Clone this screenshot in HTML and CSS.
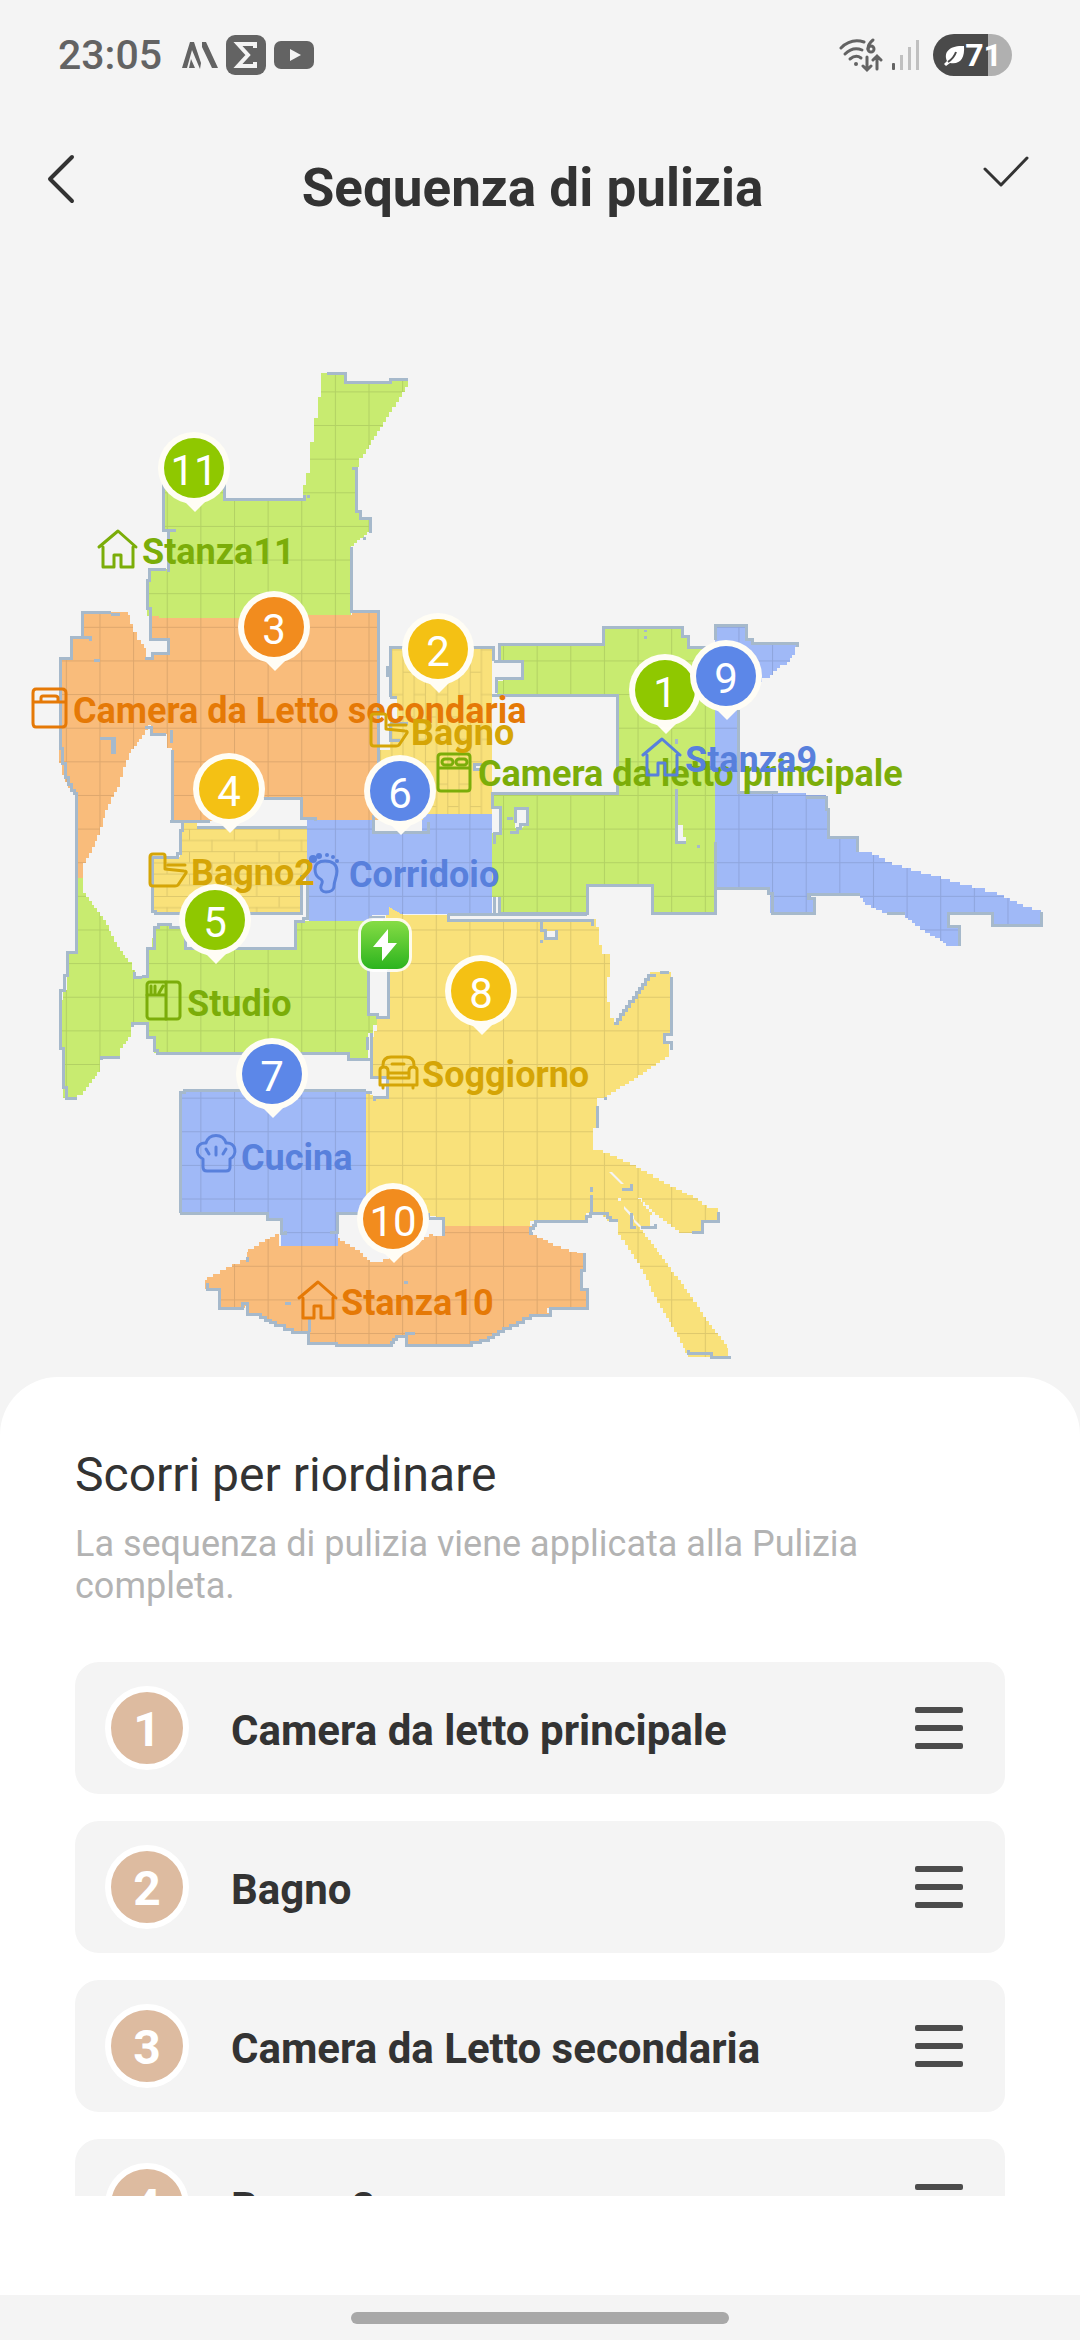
FILE: index.html
```html
<!DOCTYPE html>
<html lang="it" dir="ltr">
<head>
  <meta charset="utf-8">
  <meta name="viewport" content="width=device-width, initial-scale=1">
  <title>Sequenza di pulizia</title>
  <link rel="stylesheet" href="styles.css">
</head>
<body>

  <div class="status">
    <div class="status-left">
      <span class="clock">23:05</span>
      <svg width="36" height="40" viewBox="0 0 36 40">
        <path d="M0 33 L8 7 H12 L19 28 L18 34 L10 15 L5 33z M20 7 H24 L36 33 H30 L20 12z M9 24 L13 33 H7z" fill="#636363"/>
      </svg>
      <svg width="40" height="40" viewBox="0 0 40 40">
        <rect width="40" height="40" rx="9" fill="#636363"/>
        <path d="M29 13 V9 H12 L22 20 L12 31 H29 V27" fill="none" stroke="#f4f4f4" stroke-width="4"/>
      </svg>
      <svg width="40" height="28" viewBox="0 0 40 28">
        <rect width="40" height="28" rx="7" fill="#636363"/>
        <path d="M16 8 L27 14 L16 20z" fill="#f4f4f4"/>
      </svg>
    </div>
    <div class="status-right">
      <svg width="44" height="36" viewBox="0 0 44 36">
        <g fill="none" stroke="#636363" stroke-width="3" stroke-linecap="round">
          <path d="M2 11 Q12 1 25 5"/>
          <path d="M6 17 Q14 9 23 13"/>
          <path d="M11 22 Q17 17 22 21"/>
          <path d="M28 20 V32 M24 29 L28 33 L32 29 M38 32 V19 M34 23 L38 19 L42 23"/>
          <path d="M34 3 Q29 7 29 12"/>
          <circle cx="32" cy="12" r="3"/>
        </g>
        <circle cx="17" cy="27" r="2" fill="#636363"/>
      </svg>
      <svg width="28" height="32" viewBox="0 0 28 32">
        <rect x="0" y="24" width="3" height="7" rx="1" fill="#636363"/>
        <path d="M8 16 h3 v15 h-3z M16 8 h3 v23 h-3z M24 1 h3 v30 h-3z" fill="#c0c0c0"/>
      </svg>
      <div class="battery">
        <svg width="22" height="22" viewBox="0 0 22 22">
          <path d="M4 17 C0 8 7 1 21 2 C22 14 17 21 7 19 L3 22 L1 20z" fill="#fff"/>
          <path d="M5 18 Q11 14 13 8" fill="none" stroke="#4a4a4a" stroke-width="2"/>
        </svg>
        <span>71</span>
      </div>
    </div>
  </div>

  <header class="header">
    <button class="back" aria-label="Indietro">
      <svg width="36" height="50" viewBox="0 0 36 50">
        <path d="M26 3 L4 25 L26 47" fill="none" stroke="#333" stroke-width="4" stroke-linecap="round" stroke-linejoin="round"/>
      </svg>
    </button>
    <h1>Sequenza di pulizia</h1>
    <button class="confirm" aria-label="Conferma">
      <svg width="46" height="34" viewBox="0 0 46 34">
        <path d="M2 14 L18 30 L44 3" fill="none" stroke="#333" stroke-width="3" stroke-linecap="round" stroke-linejoin="round"/>
      </svg>
    </button>
  </header>

  <main class="map">
    <svg viewBox="0 240 1080 1137" role="img" aria-label="Mappa delle stanze">
      <defs>
        <pattern id="tiles" x="32.2" y="391.4" width="33.63" height="33.63" patternUnits="userSpaceOnUse">
          <path d="M0 .5 H34 M.5 0 V34" class="grout"/>
        </pattern>
        <pattern id="bricks" x="189" y="828.8" width="44.8" height="22.4" patternUnits="userSpaceOnUse">
          <path d="M0 .5 H45 M0 11.7 H45 M.5 0 V11 M22.9 11 V22.4" class="grout"/>
        </pattern>
        <pattern id="planks" x="447.3" y="671.7" width="22.4" height="44.8" patternUnits="userSpaceOnUse">
          <path d="M.5 0 V45 M11.7 0 V45 M0 .5 H11 M11 22.9 H22.4" class="grout"/>
        </pattern>

        <!-- room outlines, used once for the colour and once for the floor -->
        <g class="cells">
          <path id="r11" d="M321 373 H345 V382 H390 V379 H408 V387 L383 427 L374 440 L363 458 L359 467 L357 468 V510 L359 518 L370 520 V532 L357 543 L351 548 V615 H273 V618 H159 V616 H150 L147 607 V580 L149 569 H166 L168 530 L163 529 V483 H224 V499 H303 V485 L306 473 L310 442 L314 418 L318 397z"/>
          <path id="r3" d="M81 612 H111 L128 615 L130 624 L133 632 L137 640 L144 648 L146 658 H152 V653 H168 V639 H149 V616 H159 V618 H273 V615 H352 V612 H378 V820 H315 L301 818 V798 H240 V821 H172 V748 H167 V734 H151 V725 L145 735 L131 753 L126 767 L120 787 L114 797 L108 810 L100 835 L92 853 L83 868 V878 H76 V795 L71 788 L65 775 L62 763 L59 748 V658 H71 V639 L81 637z"/>
          <path id="r5" d="M76 878 H83 V893 L103 920 L117 947 L128 962 L135 977 H142 L147 972 L149 948 L154 927 L158 924 H170 V927 H185 V948 H295 V921 H373 L368 972 V1014 L377 1017 V1025 L373 1033 L368 1037 V1059 H348 V1053 H156 L154 1037 H147 V1023 H132 L131 1037 L123 1048 L120 1057 H101 L100 1072 L92 1083 L83 1095 L77 1098 H66 L63 1087 V1050 L60 1048 V1000 L63 990 L67 975 V953 H76z"/>
          <path id="r4" d="M182 823 H197 V827 H307 V875 H300 V913 H154 L152 910 V857 H177 L180 853 V830z"/>
          <path id="r6" d="M307 820 H373 V832 H422 V814 H492 V914 H404 L390 908 V915 H372 V921 H309 V875 H307z"/>
          <path id="r2" d="M390 647 H492 V814 H423 V820 H378 V750 L390 748 V723 L397 720 V697 H390z"/>
          <path id="r1" d="M499 644 H603 V627 H678 L682 636 H688 V647 H715 V913 H651 V885 H587 V913 H499 V897 H492 V833 H500 V807 H492 V793 H617 V695 H497 V681 L503 678 H522 V661 H499z"/>
          <path id="r9" d="M715 625 H746 L747 639 L752 643 H792 L797 647 L795 655 L787 665 L780 668 L770 678 L762 682 L738 700 V792 L778 793 L806 795 L826 797 V809 L828 810 V837 L857 839 V852 L872 855 L892 865 L960 885 L997 895 L1023 907 L1041 912 V925 H992 V913 H950 V927 H959 V946 H949 L940 938 L930 933 L915 923 L905 915 L887 913 L865 902 L860 894 H808 L814 901 V913 H772 L770 888 H715z"/>
          <path id="r8" d="M389 907 L403 915 H448 V919 H592 L596 927 L599 945 L602 954 H610 V977 H607 V1002 L610 1018 L614 1023 L648 975 L650 972 H671 V1033 L663 1037 L665 1042 L671 1044 L669 1057 L647 1072 L607 1098 L597 1102 V1128 L593 1135 V1150 L603 1153 L630 1165 L670 1187 L693 1198 L707 1208 L718 1212 V1221 H702 V1233 H683 L675 1227 L655 1212 L642 1198 L632 1193 L652 1215 L650 1227 H642 L640 1230 L648 1240 L665 1263 L690 1297 L703 1317 L727 1348 L728 1357 H712 L688 1353 L677 1332 L660 1303 L640 1263 L628 1245 L618 1230 V1221 H610 L603 1213 H588 L586 1221 H533 L530 1226 H443 V1219 L428 1213 H366 V1091 L373 1098 H386 L388 1087 V1077 H371 V1037 L377 1025 V1017 H388 V960 L372 940z"/>
          <path id="r7" d="M180 1091 H366 V1213 H337 L338 1246 H279 L281 1219 H268 V1213 H180z"/>
          <path id="r10" d="M279 1234 L270 1239 L248 1252 L247 1260 L232 1267 L207 1280 L205 1289 H219 V1308 H242 L247 1303 V1314 L260 1317 L275 1325 L292 1332 H308 V1343 L336 1345 H388 L396 1336 H406 V1345 H463 L488 1337 L503 1328 L530 1315 L550 1313 L547 1308 H587 V1289 H581 V1270 L584 1253 L577 1252 L553 1243 L532 1232 V1226 H443 V1236 L433 1234 L420 1243 L383 1262 L370 1260 L360 1250 L340 1238 L338 1246 H279z"/>
        </g>

        <!-- number pin, tip points down -->
        <g id="pin">
          <path d="M-10 33 L1 44 L12 33z"/>
          <circle r="36"/>
        </g>

        <g id="house">
          <path d="M1 17 L20 1 L38 17 M5 17 V37 H16 V25 H23 V37 H35 V17"/>
        </g>
        <g id="bath">
          <path d="M4 1 H14 Q16 1 16 3 V16 L35 18 Q38 18 37 20 L29 32 Q28 33 26 33 H4 Q1 33 1 30 V4 Q1 1 4 1z M19 12 H36"/>
        </g>
      </defs>

      <g shape-rendering="crispEdges">
        <use href="#r11" class="green"/>
        <use href="#r3" class="orange"/>
        <use href="#r5" class="green"/>
        <use href="#r8" class="yellow"/>
        <use href="#r6" class="blue"/>
        <use href="#r4" class="yellow"/>
        <use href="#r2" class="yellow"/>
        <use href="#r1" class="green"/>
        <use href="#r9" class="blue"/>
        <use href="#r10" class="orange"/>
        <use href="#r7" class="blue"/>
        <path d="M389 907 L403 915 H412 V925 H389z" class="yellow"/>
      </g>
      <g>
        <use href="#r11" fill="url(#tiles)"/>
        <use href="#r3" fill="url(#tiles)"/>
        <use href="#r5" fill="url(#tiles)"/>
        <use href="#r8" fill="url(#tiles)"/>
        <use href="#r6" fill="url(#tiles)"/>
        <use href="#r4" fill="url(#bricks)"/>
        <use href="#r2" fill="url(#planks)"/>
        <use href="#r1" fill="url(#tiles)"/>
        <use href="#r9" fill="url(#tiles)"/>
        <use href="#r10" fill="url(#tiles)"/>
        <use href="#r7" fill="url(#tiles)"/>
      </g>

      <!-- free spots inside the rooms -->
      <g fill="#f4f4f4">
        <path d="M515 808 H527 V823 L522 828 H515z M677 825 H683 V837 H686 V843 H677z M545 931 H555 V938 H545z M369 970 H388 V1016 H369z M474 764 H482 V769 H474z M380 700 H388 V748 H380z"/>
        <path d="M609 1172 h3 l12 12 h-3z M618 1198 h3 v3 h-3z M624 1206 l10 10 v4 l-10 -11z M634 1219 l8 8 h-3 l-5 -5z"/>
      </g>

      <g class="walls cells" shape-rendering="crispEdges">
        <path d="M327 373 H345 V382 H390 V379 H408 M352 468 H356 V511 H360 V518 H370 V533 M363 538 H366 M351 547 V611 H378 V815"/>
        <path d="M163 483 V530 H176 M168 530 V572 M166 569 H149 V580 H147 V608 H150 V639 H168 V653 H152 V658 H145 M224 483 V499 H304 V495 M307 496 H310"/>
        <path d="M111 612 H82 V637 H71 V658 H60 V748 H62 V763 H65 V777 L71 790 L76 796 V952 H67 V975 H64 V990 L60 1000 V1048 H63 V1087 L66 1098 H77 M111 614 H120 M82 637 L90 641 M94 660 H100 M100 738 H114 V754 M112 738 V754"/>
        <path d="M145 727 H151 V734 H166 M171 730 V743 M172 750 V821 H210 M264 798 H301 V818 H315 V821 M170 821 H182 M307 827 H197 M182 823 V830 H180 V853 L177 857 H152 V911 H155 V913 H301 V875 M307 875 V918"/>
        <path d="M373 815 V832 H428 V822 M390 697 H397 M390 697 V647 H405 M470 647 H493 V661 M387 666 V677 M390 723 H408 M390 724 V740 H400"/>
        <path d="M494 661 H499 V644 H603 V627 H678 L682 636 H688 V647 H712 M499 661 H522 V678 H503 L496 682 V693 M492 695 H617 V793 H492 V807 H500 V833 H494 V844 M494 897 V913 M499 897 V913 H587 V885 H652 V913 H715 V842 M645 630 V632 M645 636 V639"/>
        <path d="M515 823 V808 H527 V824 H522 L517 832 H510 M507 818 H513 M676 789 V842 H686 M697 846 H700 M676 739 V744 M482 764 H474 V769 H482"/>
        <path d="M715 640 V625 H746 V639 H752 V643 H792 L797 647 M738 710 V792 H778 M806 797 H826 V809 H828 V837 H857 V852 M1041 912 V925 H992 V913 H948 V926 H959 V946 M887 913 H905 M860 894 H812 L808 898 L814 901 V913 H772 V893 L768 888 H716"/>
        <path d="M494 897 V913 M448 914 V920 H592 V926 M448 914 H587 M541 920 V930 H545 V938 H556 V930 M540 941 H543"/>
        <path d="M614 1023 L648 975 H656 M660 972 H669 M671 977 V1034 H664 V1042 H671 V1050 M607 1098 H604 M597 1106 V1128"/>
        <path d="M142 977 H135 L134 972 M142 976 L147 972 V948 H149 L154 948 V927 L158 924 H170 V927 H185 V948 H295 V921 H303 V918 H309 M368 970 V1014 H377 V1017 H388 V970 M369 917 H385"/>
        <path d="M77 1098 H66 M101 1060 V1057 H120 M132 1027 V1023 H147 V1037 H154 V1050 L157 1053 H348 V1059 H371 V1077 H387 V1097 H374 V1101 M371 1033 V1059 M367 1050 V1037"/>
        <path d="M372 1092 H366 M180 1213 V1092 H184 V1090 H366 M180 1213 H267 V1219 H281 V1233 L285 1231 M366 1213 H337 V1232 H330 M428 1213 V1218 H443 V1236"/>
        <path d="M533 1233 L530 1228 L535 1221 H586 V1216 L590 1213 H603 L610 1220 H618 M591 1195 V1213 M591 1187 V1192 M622 1189 H631 V1184 M631 1213 V1227 H636 M641 1227 H650 L655 1224 M718 1212 V1221 H702 V1232 H692 M688 1350 V1353 H711 V1357 H731"/>
        <path d="M247 1257 V1262 M207 1283 V1289 H219 V1308 H242 V1303 H247 V1314 L260 1317 L275 1325 L292 1332 H308 V1343 H336 V1345 H388 L396 1336 H406 V1345 H463 L488 1337 L503 1328 L530 1315 H550 V1308 H587 V1289 H581 V1270 H584 V1253 M309 1332 V1319 M405 1333 H415 M404 1282 H408 M285 1303 H291"/>
      </g>

      <!-- charging dock -->
      <linearGradient id="dock" x1="0" y1="0" x2="0" y2="1">
        <stop offset="0" stop-color="#86dc45"/>
        <stop offset="1" stop-color="#2cb41e"/>
      </linearGradient>
      <rect x="358" y="918" width="54" height="54" rx="15" fill="#fff" fill-opacity=".85"/>
      <rect x="361" y="921" width="48" height="48" rx="12" fill="url(#dock)"/>
      <path d="M388 929 L373 947 H382 V961 L397 943 H388z" fill="#fff"/>

      <g class="label orange-ink">
        <path d="M36 689 H62 Q66 689 66 693 V723 Q66 727 62 727 H36 Q33 727 33 723 V693 Q33 689 36 689z M33 702 H66 M41 702 V698 Q41 696 43 696 H55 Q58 696 58 698 V702"/>
        <text x="73" y="723">Camera da Letto secondaria</text>
      </g>
      <g class="label green-ink">
        <use href="#house" x="98" y="530"/>
        <text x="142" y="564">Stanza11</text>
        <path d="M441 754 H467 Q470 754 470 757 V788 Q470 791 467 791 H441 Q438 791 438 788 V757 Q438 754 441 754z M438 768 H470"/>
        <rect x="442" y="759" width="11" height="6" rx="3"/>
        <rect x="456" y="759" width="11" height="6" rx="3"/>
        <text x="478" y="786">Camera da letto principale</text>
        <rect x="147" y="982" width="33" height="37" rx="3"/>
        <path d="M166 982 V1019 M147 995 H166 M151 986 V993 M155 986 V993 M159 993 L163 986"/>
        <text x="187" y="1016">Studio</text>
      </g>
      <g class="label yellow-ink">
        <use href="#bath" x="370" y="713"/>
        <text x="411" y="745">Bagno</text>
        <use href="#bath" x="149" y="853"/>
        <text x="191" y="885">Bagno2</text>
        <path d="M383 1067 V1065 Q383 1057 391 1057 H406 Q414 1057 414 1065 V1067 M380 1085 V1070 Q380 1067 384 1067 Q388 1067 388 1071 V1078 H409 V1071 Q409 1067 413 1067 Q417 1067 417 1070 V1085z M388 1073 H409 M392 1064 H404 M383 1085 V1088 M413 1085 V1088"/>
        <text x="422" y="1087">Soggiorno</text>
      </g>
      <g class="label blue-ink">
        <use href="#house" x="642" y="738"/>
        <text x="685" y="772">Stanza9</text>
        <path d="M315 869 C315 864 319 861 325 861 C333 861 337 865 337 871 C337 877 334 881 334 886 C334 890 330 892 326 892 C322 892 320 889 321 886 C323 882 323 880 319 878 C316 876 315 873 315 869z"/>
        <g fill="#5880dc" stroke="none">
          <circle cx="313" cy="859" r="4"/>
          <circle cx="319" cy="856" r="3"/>
          <circle cx="327" cy="855" r="2"/>
          <circle cx="333" cy="857" r="2"/>
          <circle cx="337" cy="861" r="2"/>
        </g>
        <text x="349" y="887">Corridoio</text>
        <path d="M203 1159 C194 1155 196 1142 206 1143 C209 1133 223 1133 226 1143 C236 1142 238 1155 230 1159 V1167 Q230 1171 226 1171 H207 Q203 1171 203 1167z M206 1149 L209 1154 M216 1147 V1155 M226 1149 L223 1154"/>
        <text x="241" y="1170">Cucina</text>
      </g>
      <g class="label orange-ink">
        <use href="#house" x="298" y="1281"/>
        <text x="341" y="1315">Stanza10</text>
      </g>

      <g class="pin">
        <g transform="translate(665 690)"><use href="#pin"/><circle r="30" class="green-pin"/><text y="17">1</text></g>
        <g transform="translate(438 649)"><use href="#pin"/><circle r="30" class="yellow-pin"/><text y="17">2</text></g>
        <g transform="translate(274 627)"><use href="#pin"/><circle r="30" class="orange-pin"/><text y="17">3</text></g>
        <g transform="translate(229 789)"><use href="#pin"/><circle r="30" class="yellow-pin"/><text y="17">4</text></g>
        <g transform="translate(215 920)"><use href="#pin"/><circle r="30" class="green-pin"/><text y="17">5</text></g>
        <g transform="translate(400 791)"><use href="#pin"/><circle r="30" class="blue-pin"/><text y="17">6</text></g>
        <g transform="translate(272 1074)"><use href="#pin"/><circle r="30" class="blue-pin"/><text y="17">7</text></g>
        <g transform="translate(481 991)"><use href="#pin"/><circle r="30" class="yellow-pin"/><text y="17">8</text></g>
        <g transform="translate(726 676)"><use href="#pin"/><circle r="30" class="blue-pin"/><text y="17">9</text></g>
        <g transform="translate(393 1219)"><use href="#pin"/><circle r="30" class="orange-pin"/><text y="17">10</text></g>
        <g transform="translate(194 468)"><use href="#pin"/><circle r="30" class="green-pin"/><text y="17">11</text></g>
      </g>
    </svg>
  </main>

  <section class="sheet">
    <h2>Scorri per riordinare</h2>
    <p>La sequenza di pulizia viene applicata alla Pulizia completa.</p>

    <ol class="rooms">
      <li class="room">
        <span class="num">1</span>
        <span class="name">Camera da letto principale</span>
        <button class="drag" aria-label="Sposta Camera da letto principale"><i></i><i></i><i></i></button>
      </li>
      <li class="room">
        <span class="num">2</span>
        <span class="name">Bagno</span>
        <button class="drag" aria-label="Sposta Bagno"><i></i><i></i><i></i></button>
      </li>
      <li class="room">
        <span class="num">3</span>
        <span class="name">Camera da Letto secondaria</span>
        <button class="drag" aria-label="Sposta Camera da Letto secondaria"><i></i><i></i><i></i></button>
      </li>
      <li class="room">
        <span class="num">4</span>
        <span class="name">Bagno2</span>
        <button class="drag" aria-label="Sposta Bagno2"><i></i><i></i><i></i></button>
      </li>
    </ol>
  </section>

  <footer class="navbar"><div class="handle"></div></footer>

  <script src="script.js"></script>
</body>
</html>
```
FILE: styles.css
```css
* {
  padding: 0;
  margin: 0;
  box-sizing: border-box;
}

body {
  height: 100vh;
  display: flex;
  flex-direction: column;
  background: #f4f4f4;
  color: #333;
  font-family: Roboto, sans-serif;
}

button {
  border: 0;
  background: none;
  cursor: pointer;
}

svg {
  display: block;
}

/* status bar */
.status {
  height: 110px;
  padding: 0 68px 0 58px;
  display: flex;
  align-items: center;
  justify-content: space-between;
}

.status-left,
.status-right {
  display: flex;
  align-items: center;
}

.status-left {
  gap: 8px;
}

.status-right {
  gap: 9px;
}

.clock {
  font-size: 41px;
  font-weight: 500;
  color: #636363;
  margin-right: 12px;
}

.battery {
  width: 79px;
  height: 42px;
  border-radius: 21px;
  margin-left: 4px;
  display: flex;
  align-items: center;
  justify-content: center;
  background: linear-gradient(90deg, #4a4a4a 70%, #b0b0b0 70%);
  color: #fff;
  font-size: 32px;
  font-weight: 700;
}

/* title bar */
.header {
  height: 130px;
  padding: 0 51px 0 46px;
  display: flex;
  justify-content: space-between;
}

.header h1 {
  font-size: 53px;
  line-height: 64px;
  font-weight: 700;
  margin-top: 46px;
}

.back {
  align-self: flex-start;
  margin-top: 44px;
}

.confirm {
  align-self: flex-start;
  margin-top: 45px;
}

/* map */
.map svg {
  width: 100%;
  height: auto;
}

.green { fill: #c8eb70; }
.orange { fill: #f9bc7b; }
.yellow { fill: #f9e17a; }
.blue { fill: #a0b9f7; }

.grout {
  fill: none;
  stroke: #000;
  stroke-opacity: 0.11;
  stroke-width: 1;
}

.walls {
  fill: none;
  stroke: #a6b9cb;
  stroke-width: 3;
}

.label {
  fill: none;
  stroke-width: 3;
  stroke-linejoin: round;
  stroke-linecap: round;
}

.label text {
  stroke: none;
  font-size: 36px;
  font-weight: 700;
}

.green-ink { stroke: #7bad09; }
.green-ink text { fill: #7bad09; }
.orange-ink { stroke: #e57906; }
.orange-ink text { fill: #e57906; }
.yellow-ink { stroke: #d5a506; }
.yellow-ink text { fill: #d5a506; }
.blue-ink { stroke: #5880dc; }
.blue-ink text { fill: #5880dc; }

.pin {
  fill: #fffdf5;
}

.pin text {
  fill: #fff;
  font-size: 42px;
  text-anchor: middle;
}

.green-pin { fill: #8fc800; }
.orange-pin { fill: #f28c1e; }
.yellow-pin { fill: #f4c114; }
.blue-pin { fill: #5c87e8; }

/* bottom sheet */
.sheet {
  flex: 1;
  min-height: 0;
  display: flex;
  flex-direction: column;
  background: #fff;
  border-radius: 58px 58px 0 0;
  padding: 68px 75px 99px;
}

.sheet h2 {
  font-size: 48px;
  line-height: 60px;
  font-weight: 400;
}

.sheet p {
  font-size: 36px;
  line-height: 42px;
  color: #b3b3b3;
  margin: 18px 0 55px;
}

.rooms {
  flex: 1;
  min-height: 0;
  overflow: hidden;
  list-style: none;
  display: flex;
  flex-direction: column;
  gap: 27px;
}

.room {
  flex: none;
  height: 132px;
  padding: 0 42px 0 30px;
  display: flex;
  align-items: center;
  background: #f4f4f4;
  border-radius: 24px 18px 18px 24px;
}

.num {
  width: 84px;
  height: 84px;
  border: 6px solid #fff;
  border-radius: 50%;
  background: #ddbba0;
  color: #fff;
  font-size: 48px;
  line-height: 75px;
  font-weight: 700;
  text-align: center;
}

.name {
  flex: 1;
  margin-left: 42px;
  padding-top: 5px;
  font-size: 42px;
  line-height: 50px;
  font-weight: 700;
}

.drag {
  width: 48px;
  display: flex;
  flex-direction: column;
  gap: 12px;
}

.drag i {
  height: 6px;
  border-radius: 2px;
  background: #4c4c4c;
}

/* gesture bar */
.navbar {
  height: 45px;
  display: flex;
  align-items: center;
  justify-content: center;
}

.handle {
  width: 35%;
  height: 12px;
  border-radius: 6px;
  background: #a8a8a8;
}
```
FILE: script.js
```js
// The robot scans the floor in small square cells, so slanted edges are drawn as steps
const cell = 3;

function toSteps(d) {
  const tokens = d.match(/[MLHVz]|-?[\d.]+/g);
  let out = "";
  let cmd = "";
  let x = 0, y = 0, startX = 0, startY = 0;

  function lineTo(nx, ny) {
    const dx = nx - x;
    const dy = ny - y;
    const n = Math.max(1, Math.round(Math.min(Math.abs(dx), Math.abs(dy)) / cell));
    for (let i = 1; i <= n; i++) {
      out += `H${Math.round(x + dx * i / n)} V${Math.round(y + dy * i / n)} `;
    }
    x = nx;
    y = ny;
  }

  for (let i = 0; i < tokens.length;) {
    if (/[MLHVz]/.test(tokens[i])) cmd = tokens[i++];
    if (cmd === "M") {
      x = startX = +tokens[i++];
      y = startY = +tokens[i++];
      out += `M${x} ${y} `;
    } else if (cmd === "L") {
      lineTo(+tokens[i++], +tokens[i++]);
    } else if (cmd === "H") {
      lineTo(+tokens[i++], y);
    } else if (cmd === "V") {
      lineTo(x, +tokens[i++]);
    } else {
      lineTo(startX, startY);
      out += "z ";
    }
  }
  return out;
}

document.querySelectorAll(".cells path").forEach((path) => {
  path.setAttribute("d", toSteps(path.getAttribute("d")));
});
```
